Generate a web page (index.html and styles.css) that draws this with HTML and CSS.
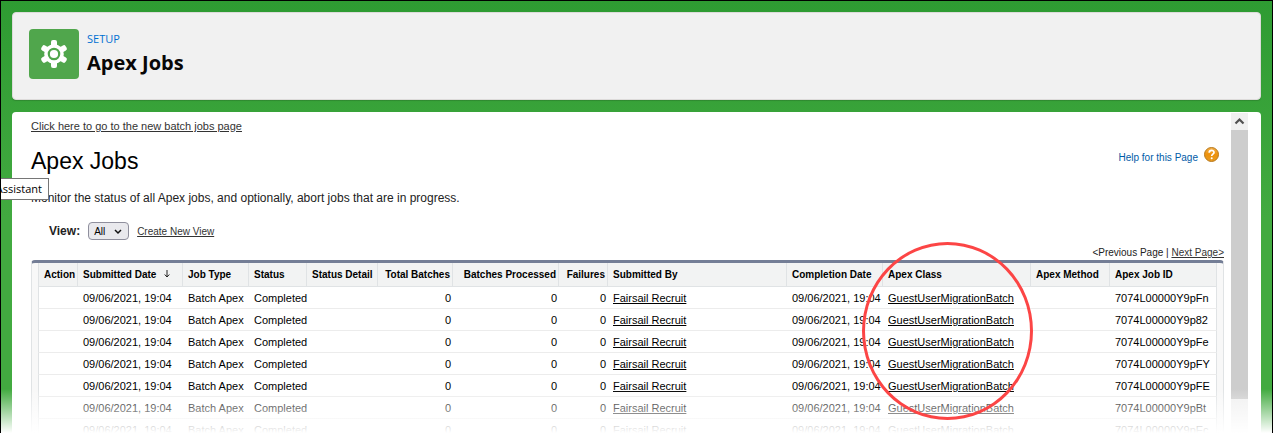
FILE: index.html
```
<!DOCTYPE html>
<html lang="en">
  <head>
    <meta charset="utf-8">
    <title>Apex Jobs</title>
    <link rel="stylesheet" href="styles.css">
  </head>
  <body>
    <div class="shell">
      <header class="page-header">
        <svg class="setup-icon" viewBox="0 0 50 50" aria-hidden="true">
          <rect width="50" height="50" rx="4" fill="#50a64c"/>
          <g fill="#fff">
            <rect x="22" y="11" width="6" height="28" rx="2"/>
            <rect x="22" y="11" width="6" height="28" rx="2" transform="rotate(60 25 25)"/>
            <rect x="22" y="11" width="6" height="28" rx="2" transform="rotate(120 25 25)"/>
            <circle cx="25" cy="25" r="9.800"/>
          </g>
          <circle cx="25" cy="25" r="5.200" fill="#fff" stroke="#50a64c" stroke-width="2.200"/>
        </svg>
        <div class="header-text">
          <span class="eyebrow">SETUP</span>
          <h1>Apex Jobs</h1>
        </div>
      </header>

      <main class="panel">
        <div class="content">
          <a class="batch-link" href="#">Click here to go to the new batch jobs page</a>

          <div class="title-row">
            <h2>Apex Jobs</h2>
            <a class="help" href="#">
              <span>Help for this Page</span>
              <svg width="15" height="15" viewBox="0 0 15 15" aria-hidden="true">
                <defs>
                  <linearGradient id="orange" x1="0" y1="0" x2="0" y2="1">
                    <stop offset="0" stop-color="#f3b04a"/>
                    <stop offset="0.500" stop-color="#ee920c"/>
                    <stop offset="1" stop-color="#e69a20"/>
                  </linearGradient>
                </defs>
                <circle cx="7.500" cy="7.500" r="7" fill="url(#orange)" stroke="#b8791c"/>
                <path d="M5.200 5.700c0-3.200 4.800-3.100 4.800-.3 0 1.700-2.300 1.700-2.300 3.500" fill="none" stroke="#fff" stroke-width="1.700"/>
                <circle cx="7.700" cy="11.200" r="1" fill="#fff"/>
              </svg>
            </a>
          </div>

          <p class="description">Monitor the status of all Apex jobs, and optionally, abort jobs that are in progress.</p>

          <div class="view-row">
            <label for="view">View:</label>
            <span class="select-wrap">
              <select id="view">
                <option>All</option>
              </select>
              <svg width="8" height="6" viewBox="0 0 8 6" aria-hidden="true"><path d="M1 1l3 3 3-3" fill="none" stroke="#111" stroke-width="1.500"/></svg>
            </span>
            <a href="#">Create New View</a>
          </div>

          <div class="pager">&lt;Previous Page | <a href="#">Next Page&gt;</a></div>

          <div class="list">
            <table>
              <colgroup>
                <col class="col-action">
                <col class="col-submitted">
                <col class="col-type">
                <col class="col-status">
                <col class="col-detail">
                <col class="col-total">
                <col class="col-processed">
                <col class="col-failures">
                <col>
                <col class="col-completion">
                <col class="col-class">
                <col class="col-method">
                <col class="col-id">
              </colgroup>
              <thead>
                <tr>
                  <th>Action</th>
                  <th>Submitted Date <svg class="sort" width="6" height="8" viewBox="0 0 6 8" aria-hidden="true"><path d="M3 0v7M.700 4.500L3 7l2.300-2.500" fill="none" stroke="#222"/></svg></th>
                  <th>Job Type</th>
                  <th>Status</th>
                  <th>Status Detail</th>
                  <th class="num">Total Batches</th>
                  <th class="num">Batches Processed</th>
                  <th class="num">Failures</th>
                  <th>Submitted By</th>
                  <th>Completion Date</th>
                  <th>Apex Class</th>
                  <th>Apex Method</th>
                  <th>Apex Job ID</th>
                </tr>
              </thead>
              <tbody>
                <tr><td></td><td>09/06/2021, 19:04</td><td>Batch Apex</td><td>Completed</td><td></td><td class="num">0</td><td class="num">0</td><td class="num">0</td><td><a href="#">Fairsail Recruit</a></td><td>09/06/2021, 19:04</td><td><a href="#">GuestUserMigrationBatch</a></td><td></td><td>7074L00000Y9pFn</td></tr>
                <tr><td></td><td>09/06/2021, 19:04</td><td>Batch Apex</td><td>Completed</td><td></td><td class="num">0</td><td class="num">0</td><td class="num">0</td><td><a href="#">Fairsail Recruit</a></td><td>09/06/2021, 19:04</td><td><a href="#">GuestUserMigrationBatch</a></td><td></td><td>7074L00000Y9p82</td></tr>
                <tr><td></td><td>09/06/2021, 19:04</td><td>Batch Apex</td><td>Completed</td><td></td><td class="num">0</td><td class="num">0</td><td class="num">0</td><td><a href="#">Fairsail Recruit</a></td><td>09/06/2021, 19:04</td><td><a href="#">GuestUserMigrationBatch</a></td><td></td><td>7074L00000Y9pFe</td></tr>
                <tr><td></td><td>09/06/2021, 19:04</td><td>Batch Apex</td><td>Completed</td><td></td><td class="num">0</td><td class="num">0</td><td class="num">0</td><td><a href="#">Fairsail Recruit</a></td><td>09/06/2021, 19:04</td><td><a href="#">GuestUserMigrationBatch</a></td><td></td><td>7074L00000Y9pFY</td></tr>
                <tr><td></td><td>09/06/2021, 19:04</td><td>Batch Apex</td><td>Completed</td><td></td><td class="num">0</td><td class="num">0</td><td class="num">0</td><td><a href="#">Fairsail Recruit</a></td><td>09/06/2021, 19:04</td><td><a href="#">GuestUserMigrationBatch</a></td><td></td><td>7074L00000Y9pFE</td></tr>
                <tr><td></td><td>09/06/2021, 19:04</td><td>Batch Apex</td><td>Completed</td><td></td><td class="num">0</td><td class="num">0</td><td class="num">0</td><td><a href="#">Fairsail Recruit</a></td><td>09/06/2021, 19:04</td><td><a href="#">GuestUserMigrationBatch</a></td><td></td><td>7074L00000Y9pBt</td></tr>
                <tr><td></td><td>09/06/2021, 19:04</td><td>Batch Apex</td><td>Completed</td><td></td><td class="num">0</td><td class="num">0</td><td class="num">0</td><td><a href="#">Fairsail Recruit</a></td><td>09/06/2021, 19:04</td><td><a href="#">GuestUserMigrationBatch</a></td><td></td><td>7074L00000Y9pEc</td></tr>
              </tbody>
            </table>
            <div class="highlight"></div>
          </div>
        </div>

        <div class="scrollbar" aria-hidden="true">
          <svg viewBox="0 0 17 17"><path d="M4.500 10.500l4-4 4 4" fill="none" stroke="#505050" stroke-width="2.200"/></svg>
          <div class="thumb"></div>
        </div>
      </main>

      <div class="tooltip"><span>Assistant</span></div>
      <div class="fade"></div>
    </div>
  </body>
</html>
```
FILE: styles.css
```
* {
  box-sizing: border-box;
}

body {
  margin: 0;
  font-family: "Liberation Sans", Arial, sans-serif;
  color: #222;
}

.shell {
  position: relative;
  display: flex;
  flex-direction: column;
  gap: 12px;
  height: 100vh;
  padding: 11px 11px 0;
  overflow: hidden;
  border: 1px solid #000;
  border-bottom: 0;
  background: linear-gradient(#2e9b32, #42aa40 50%);
}

/* Setup header */
.page-header {
  display: flex;
  flex: none;
  gap: 8px;
  padding: 16px 16px 20px;
  border: 1px solid #dddbda;
  border-radius: 4px;
  background: #f1f1f1;
  box-shadow: 0 1px 1px rgba(0, 0, 0, .15);
}

.setup-icon {
  width: 50px;
  height: 50px;
}

.header-text {
  font-family: "Open Sans", "Noto Sans", sans-serif;
}

.eyebrow {
  display: block;
  color: #0070d2;
  font-size: 11px;
  line-height: 20px;
}

h1 {
  margin: 0;
  color: #080707;
  font-size: 20px;
  line-height: 28px;
}

/* Main panel */
.panel {
  display: flex;
  flex: 1;
  gap: 7px;
  min-height: 0;
  padding: 1px 13px 0 19px;
  border-radius: 4px 4px 0 0;
  background: #fff;
}

.content {
  flex: 1;
  min-width: 0;
  font-size: 11px;
}

a {
  color: #333;
}

.batch-link {
  display: block;
  margin-top: 6px;
  line-height: 14px;
}

.title-row {
  display: flex;
  justify-content: space-between;
  margin-top: 14px;
  padding-right: 5px;
}

h2 {
  margin: 0;
  color: #000;
  font-size: 23px;
  font-weight: normal;
  line-height: 28px;
}

.help {
  display: flex;
  gap: 6px;
  height: 20px;
  color: #015ba7;
  font-size: 10px;
  line-height: 22px;
  text-decoration: none;
}

.description {
  margin: 15px 0 0;
  font-size: 12px;
  line-height: 16px;
}

.view-row {
  display: flex;
  align-items: center;
  gap: 8px;
  margin-top: 16px;
  padding-left: 18px;
  font-size: 10px;
}

.view-row label {
  font-size: 12px;
  font-weight: bold;
}

.select-wrap {
  position: relative;
}

.select-wrap select {
  display: block;
  width: 41px;
  height: 18px;
  padding: 0 5px;
  appearance: none;
  border: 1px solid #8f8f9d;
  border-radius: 4px;
  background: #e9e9ed;
  color: #000;
  font-family: inherit;
  font-size: 10px;
}

.select-wrap svg {
  position: absolute;
  top: 7px;
  right: 7px;
  pointer-events: none;
}

.pager {
  margin-top: 6px;
  font-size: 10px;
  line-height: 14px;
  text-align: right;
}

/* Job list */
.list {
  position: relative;
  padding: 0 6px;
  border: 1px solid #e0e3e5;
  border-top: 3px solid #747e96;
  border-radius: 4px 4px 0 0;
  background: #f8f8f8;
}

table {
  width: 100%;
  table-layout: fixed;
  border-collapse: separate;
  border-spacing: 0;
  background: #fff;
  color: #000;
}

th,
td {
  height: 22px;
  padding: 0 6px;
  border-bottom: 1px solid #ececec;
  text-align: left;
  white-space: nowrap;
}

th {
  height: 24px;
  padding: 0 5px;
  border-bottom-color: #e0e3e5;
  border-left: 1px solid #e0e3e5;
  background: #f2f3f3;
  font-size: 10px;
}

td:first-child {
  border-left: 1px solid #e0e3e5;
}

th:last-child,
td:last-child {
  border-right: 1px solid #e0e3e5;
}

td a {
  color: #000;
}

.num {
  padding-right: 1px;
  text-align: right;
}

th.num {
  padding-right: 2px;
}

.sort {
  margin-left: 5px;
}

.col-action { width: 39px; }
.col-submitted { width: 105px; }
.col-type { width: 66px; }
.col-status { width: 58px; }
.col-detail { width: 71px; }
.col-total { width: 75px; }
.col-processed { width: 106px; }
.col-failures { width: 49px; }
.col-completion { width: 96px; }
.col-class { width: 148px; }
.col-method { width: 79px; }
.col-id { width: 108px; }

/* Drawn over the fade */
.highlight {
  position: absolute;
  z-index: 2;
  top: -21px;
  right: 190px;
  width: 171px;
  height: 178px;
  border: 3px solid #fc4545;
  border-radius: 50%;
  pointer-events: none;
}

/* Scrollbar */
.scrollbar {
  display: flex;
  flex-direction: column;
  width: 17px;
  background: #f0f0f0;
}

.scrollbar svg {
  flex: none;
  height: 17px;
}

.thumb {
  height: 84%;
  background: #cdcdcd;
}

.tooltip {
  position: absolute;
  top: 177px;
  left: 0;
  display: flex;
  justify-content: flex-end;
  width: 48px;
  padding-right: 6px;
  overflow: hidden;
  border: 1px solid #767676;
  border-left: 0;
  background: #fff;
  color: #000;
  font-family: "Open Sans", "Noto Sans", sans-serif;
  font-size: 11px;
  line-height: 20px;
}

/* Bottom of the page fades out */
.fade {
  position: absolute;
  z-index: 1;
  right: -1px;
  bottom: 0;
  left: -1px;
  height: 44px;
  background: linear-gradient(rgba(255, 255, 255, 0), #fff);
  pointer-events: none;
}
```
